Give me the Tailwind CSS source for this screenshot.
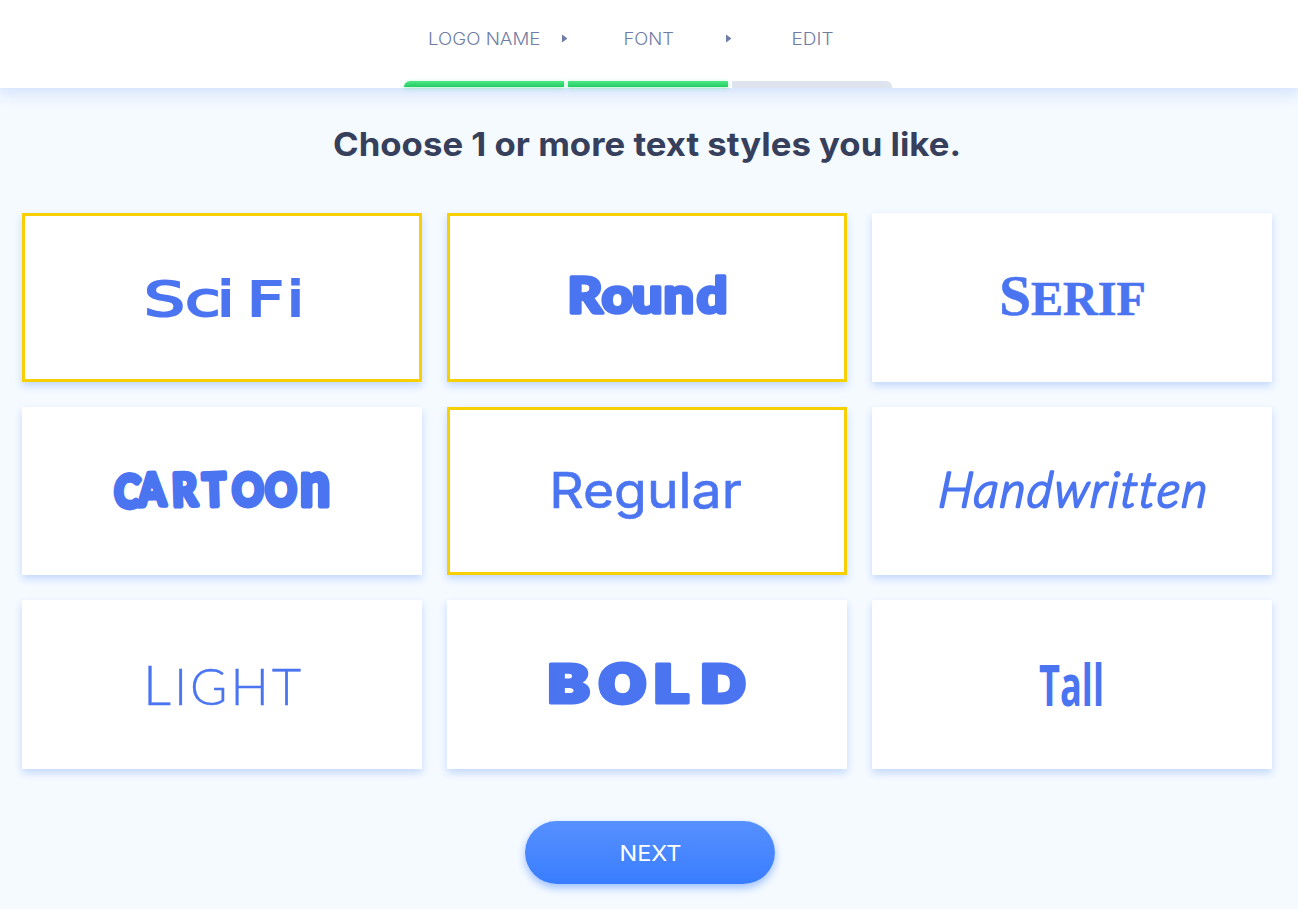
<!DOCTYPE html>
<html lang="en">
<head>
  <meta charset="UTF-8" />
  <meta name="viewport" content="width=device-width, initial-scale=1.0"/>
  <title>Logo Maker - Text Styles</title>
  <script src="https://cdn.jsdelivr.net/npm/@tailwindcss/browser@4"></script>
</head>
<body class="bg-[#f5faff] h-[909px] overflow-hidden font-['Inter',sans-serif]">
  <header class="h-[88px] bg-white flex flex-col items-center justify-between pt-[27px] pr-[2px] shadow-[0_2px_16px_3px_#cfdffc]">
    <!-- steps -->
    <nav class="w-[488px] flex text-[17px] leading-6 font-light text-[#6f7da6]">
      <svg class="w-40 h-6" viewBox="0 0 160 24" fill="currentColor"><text x="24" y="18" textLength="112.5" lengthAdjust="spacingAndGlyphs">LOGO NAME</text></svg>
      <svg class="w-1 h-6 overflow-visible" viewBox="0 0 4 24"><path d="M-2 8.3v6.4q0 .8.8.3l4-3q.5-.5 0-1l-4-3q-.8-.5-.8.3z" fill="#6f7da6"/></svg>
      <svg class="w-40 h-6" viewBox="0 0 160 24" fill="currentColor"><text x="55.5" y="18" textLength="50.5" lengthAdjust="spacingAndGlyphs">FONT</text></svg>
      <svg class="w-1 h-6 overflow-visible" viewBox="0 0 4 24"><path d="M-2 8.3v6.4q0 .8.8.3l4-3q.5-.5 0-1l-4-3q-.8-.5-.8.3z" fill="#6f7da6"/></svg>
      <svg class="w-40 h-6" viewBox="0 0 160 24" fill="currentColor"><text x="59.5" y="18" textLength="42" lengthAdjust="spacingAndGlyphs">EDIT</text></svg>
    </nav>
    <!-- progress -->
    <div class="flex gap-1 h-[7px]">
      <div class="w-40 h-1.5 rounded-tl-md bg-linear-to-b from-[#4be983] to-[#1fcb66] shadow-[0_1px_4px_#2bd96b66]"></div>
      <div class="w-40 h-1.5 bg-linear-to-b from-[#4be983] to-[#1fcb66] shadow-[0_1px_4px_#2bd96b66]"></div>
      <div class="w-40 h-[7px] rounded-tr-md bg-[#dde3ef]"></div>
    </div>
  </header>

  <main class="flex flex-col items-center">
    <h1 class="mt-9 mr-1 font-bold text-[33px] text-[#363f5b]">
      <svg class="w-[630px] h-11" viewBox="0 0 630 44" fill="currentColor"><text x="1" y="32" textLength="628" lengthAdjust="spacingAndGlyphs">Choose 1 or more text styles you like.</text></svg>
    </h1>

    <div class="mt-[45px] mr-1 grid grid-cols-[repeat(3,400px)] auto-rows-[168.67px] gap-[25px] text-[#4b74f1]">
      <div class="bg-white border-3 border-[#f6cf05] shadow-[0_4px_8px_#c3d8fb]">
        <svg class="w-full h-full" viewBox="3 3 394 163" fill="currentColor" stroke="currentColor"><text transform="scale(1.35 1)" x="90.3 120.7 144.2 155 166.5 196" y="103.5" font-family="DejaVu Sans, sans-serif" font-size="48" stroke-width="2">Sci Fi</text></svg>
      </div>
      <div class="bg-white border-3 border-[#f6cf05] shadow-[0_4px_8px_#c3d8fb]">
        <svg class="w-full h-full" viewBox="3 3 394 163" fill="currentColor" stroke="currentColor" stroke-linejoin="round"><text transform="scale(1.1 1)" x="109.5 140.5 168.2 196.8 227.2" y="100" font-family="Lato, sans-serif" font-size="49" font-weight="900" stroke-width="3.6">Round</text></svg>
      </div>
      <div class="bg-white shadow-[0_4px_8px_#c3d8fb]">
        <svg class="w-full h-full" viewBox="0 0 400 169" fill="currentColor" stroke="currentColor"><text x="127" y="102" font-family="Liberation Serif, serif" font-size="57" font-weight="700" stroke-width="0.6" textLength="147" lengthAdjust="spacingAndGlyphs">S<tspan font-size="48">ERIF</tspan></text></svg>
      </div>

      <div class="bg-white shadow-[0_4px_8px_#c3d8fb]">
        <svg class="w-full h-full" viewBox="0 0 400 169" fill="currentColor" stroke="currentColor" stroke-linejoin="round"><text transform="scale(.86 1)" x="106 135.5 175 210.5 244.5 283 323.5" y="99.5" rotate="4 -2 -2 -2 0 0 0" font-family="Lato, sans-serif" font-size="45" font-weight="900" stroke-width="5">CARTOO<tspan font-size="62">n</tspan></text></svg>
      </div>
      <div class="bg-white border-3 border-[#f6cf05] shadow-[0_4px_8px_#c3d8fb]">
        <svg class="w-full h-full" viewBox="3 3 394 163" fill="currentColor" stroke="currentColor"><text x="102" y="101.5" font-size="50" font-weight="400" stroke-width="0.6" textLength="193" lengthAdjust="spacingAndGlyphs">Regular</text></svg>
      </div>
      <div class="bg-white shadow-[0_4px_8px_#c3d8fb]">
        <svg class="w-full h-full" viewBox="0 0 400 169" fill="currentColor" stroke="currentColor" stroke-linejoin="round"><text class="[font-variant-ligatures:none]" transform="skewX(-5)" x="74" y="100" font-family="Lato, sans-serif" font-style="italic" font-weight="300" font-size="49" stroke-width="2.3" stroke-linecap="round" textLength="269" lengthAdjust="spacing">Handwritten</text></svg>
      </div>

      <div class="bg-white shadow-[0_4px_8px_#c3d8fb]">
        <svg class="w-full h-full" viewBox="0 0 400 169" fill="currentColor" stroke="currentColor"><text x="120.5" y="105" font-family="Lato, sans-serif" font-weight="300" font-size="56" stroke-width="0.3" textLength="159" lengthAdjust="spacing">L<tspan font-size="51">IGHT</tspan></text></svg>
      </div>
      <div class="bg-white shadow-[0_4px_8px_#c3d8fb]">
        <svg class="w-full h-full" viewBox="0 0 400 169" fill="currentColor" stroke="currentColor" stroke-linejoin="round"><text transform="scale(1.17 1)" x="86 129 177 217" y="103.5" font-size="54" font-weight="900" stroke-width="3">BOLD</text></svg>
      </div>
      <div class="bg-white shadow-[0_4px_8px_#c3d8fb]">
        <svg class="w-full h-full" viewBox="0 0 400 169" fill="currentColor"><text x="167" y="106" font-family="Open Sans, sans-serif" font-weight="700" font-size="58" textLength="65" lengthAdjust="spacingAndGlyphs">Tall</text></svg>
      </div>
    </div>

    <button class="mt-[52px] ml-[2px] w-[250px] h-[63px] rounded-full bg-linear-to-b from-[#5790ff] to-[#387dff] text-white text-[22px] shadow-[0_4px_8px_#9dc0ff]">
      <svg class="w-full h-full" viewBox="0 0 250 63" fill="currentColor"><text x="94.5" y="40" font-family="Inter, sans-serif" font-weight="400" textLength="62" lengthAdjust="spacingAndGlyphs">NEXT</text></svg>
    </button>
  </main>
</body>
</html>
